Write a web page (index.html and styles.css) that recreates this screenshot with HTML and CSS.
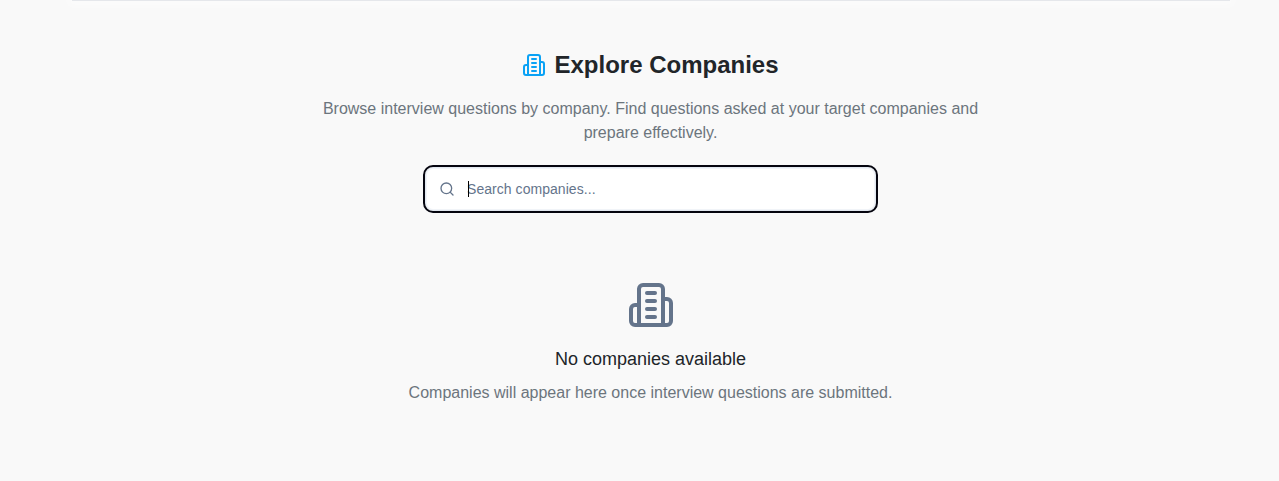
FILE: index.html
```html
<!DOCTYPE html>
<html lang="en">
<head>
    <meta charset="UTF-8">
    <title>Explore Companies</title>
    <link rel="stylesheet" href="styles.css">
</head>
<body>
    <main class="page">
        <div class="top-bar"></div>

        <section class="intro">
            <h1 class="title">
                <svg class="title-icon" viewBox="0 0 24 24" fill="none" stroke="currentColor" stroke-width="2" stroke-linecap="round" stroke-linejoin="round">
                    <path d="M6 22V4a2 2 0 0 1 2-2h8a2 2 0 0 1 2 2v18Z"/>
                    <path d="M6 12H4a2 2 0 0 0-2 2v6a2 2 0 0 0 2 2h2"/>
                    <path d="M18 9h2a2 2 0 0 1 2 2v9a2 2 0 0 1-2 2h-2"/>
                    <path d="M10 6h4"/>
                    <path d="M10 10h4"/>
                    <path d="M10 14h4"/>
                    <path d="M10 18h4"/>
                </svg>
                Explore Companies
            </h1>
            <p class="lead">Browse interview questions by company. Find questions asked at your target companies and prepare effectively.</p>

            <div class="search">
                <svg class="search-icon" viewBox="0 0 24 24" fill="none" stroke="currentColor" stroke-width="2" stroke-linecap="round" stroke-linejoin="round">
                    <circle cx="11" cy="11" r="8"/>
                    <path d="m21 21-4.3-4.3"/>
                </svg>
                <input class="search-input" type="text" placeholder="Search companies...">
                <span class="caret"></span>
            </div>
        </section>

        <section class="empty">
            <svg class="empty-icon" viewBox="0 0 24 24" fill="none" stroke="currentColor" stroke-width="2" stroke-linecap="round" stroke-linejoin="round">
                <path d="M6 22V4a2 2 0 0 1 2-2h8a2 2 0 0 1 2 2v18Z"/>
                <path d="M6 12H4a2 2 0 0 0-2 2v6a2 2 0 0 0 2 2h2"/>
                <path d="M18 9h2a2 2 0 0 1 2 2v9a2 2 0 0 1-2 2h-2"/>
                <path d="M10 6h4"/>
                <path d="M10 10h4"/>
                <path d="M10 14h4"/>
                <path d="M10 18h4"/>
            </svg>
            <h2 class="empty-title">No companies available</h2>
            <p class="empty-text">Companies will appear here once interview questions are submitted.</p>
        </section>
    </main>
</body>
</html>
```

FILE: styles.css
```css
html, body {
    height: 100%;
}

body {
    margin: 0;
    background: #f9f9f9;
    color: #212529;
    font-family: 'Liberation Sans', Arial, sans-serif;
    overflow: hidden;
}

.page {
    padding-left: 22px;
}

.top-bar {
    width: 1158px;
    height: 1px;
    margin: 0 auto;
    background: #e5e7eb;
    box-shadow: 0 0 10px 4px rgba(255, 255, 255, 0.6);
}

.intro {
    display: flex;
    flex-direction: column;
    align-items: center;
    padding-top: 47px;
}

.title {
    display: flex;
    align-items: center;
    gap: 8px;
    margin: 0;
    font-size: 24px;
    line-height: 34px;
    font-weight: 700;
}

.title-icon {
    width: 24px;
    height: 24px;
    color: #0aa2f5;
}

.lead {
    width: 672px;
    margin: 15px 0 0;
    color: #6c757d;
    font-size: 16px;
    line-height: 24px;
    text-align: center;
}

.search {
    position: relative;
    display: flex;
    align-items: center;
    box-sizing: border-box;
    width: 451px;
    height: 44px;
    margin-top: 22px;
    background: #fff;
    border: 1px solid #e2e8f0;
    border-radius: 8px;
    box-shadow: inset 0 0 0 1px #f1f4f8;
    outline: 2px solid #05050f;
    outline-offset: 0;
}

.search-icon {
    width: 16px;
    height: 16px;
    margin-left: 13px;
    color: #64748b;
}

.search-input {
    flex: 1;
    min-width: 0;
    margin-left: 12px;
    padding: 0;
    border: none;
    outline: none;
    background: transparent;
    color: #212529;
    font-family: inherit;
    font-size: 14px;
}

.search-input::placeholder {
    color: #64748b;
    letter-spacing: 0.05px;
    opacity: 1;
}

.caret {
    position: absolute;
    left: 42px;
    top: 13px;
    width: 1px;
    height: 16px;
    background: #000;
}

.empty {
    display: flex;
    flex-direction: column;
    align-items: center;
    padding-top: 70px;
}

.empty-icon {
    width: 48px;
    height: 48px;
    color: #64748b;
}

.empty-title {
    margin: 18px 0 0;
    font-size: 18px;
    line-height: 24px;
    font-weight: 400;
}

.empty-text {
    margin: 10px 0 0;
    color: #6c757d;
    font-size: 16px;
    line-height: 24px;
}
```
